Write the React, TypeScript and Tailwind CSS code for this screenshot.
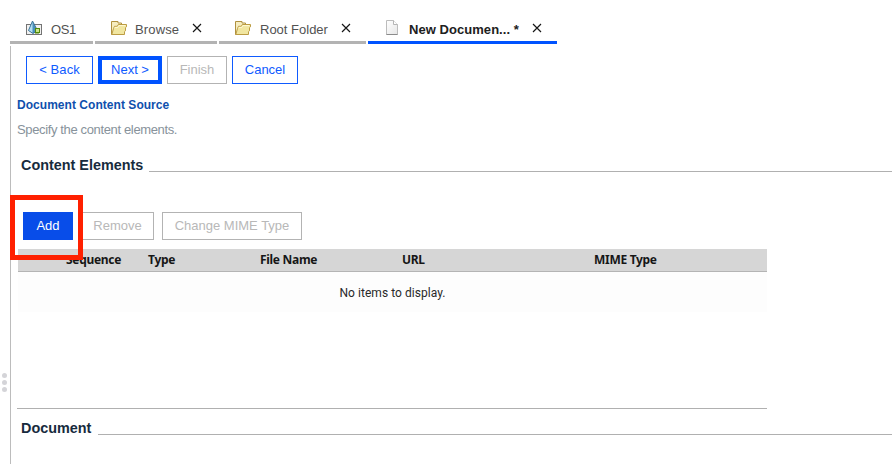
import type { ReactNode } from 'react';

const CubeIcon = () => (
  <svg width="16" height="15" viewBox="0 0 16 15">
    <rect x="0.5" y="4.5" width="15" height="10" fill="#f1f1f1" stroke="#747474" />
    <path d="M6.5 1 2.5 10.5l4.5 3 4.5-3Z" fill="#4a91bb" />
    <path d="M6.5 1 2.5 10.5l4 2.5Z" fill="#b3def2" />
    <path d="M6.5 1 2.5 10.5l4.5 3 4.5-3Z" fill="none" stroke="#376e92" strokeWidth="0.9" />
    <rect x="9.5" y="8.5" width="4" height="4" fill="#c9e58a" stroke="#528a0b" />
    <path d="M9 12.5h4v1H9z" fill="#528a0b" />
  </svg>
);

const FolderIcon = () => (
  <svg width="16" height="14" viewBox="0 0 16 14">
    <path d="M.5 13.5V.5H7V2h3.5v4L9 13.5Z" fill="#f6edc0" stroke="#b0913e" />
    <path d="M.8 13.5 2.5 7.5l1-2.2h2.8l1-1.8h8.2v2.3l-1 .8v3.2l-1 .8v2.9Z" fill="#f1e6a0" stroke="#bc9c43" />
    <path d="M3.6 6.4h3.2l1-1.8h6.7" fill="none" stroke="#fff9d6" />
  </svg>
);

const PageIcon = () => (
  <svg width="12" height="15" viewBox="0 0 12 15">
    <defs>
      <linearGradient id="sheet" x2="1" y2="1">
        <stop stopColor="#fff" />
        <stop offset="1" stopColor="#e6e6e6" />
      </linearGradient>
    </defs>
    <path d="M.5.5h7l4 4v10H.5Z" fill="url(#sheet)" stroke="#bcbcbc" />
    <path d="M.5 14.5h11" stroke="#8b8b8b" />
    <path d="M7.5.5v4h4" fill="#fff" stroke="#b5b5b5" />
  </svg>
);

const CloseIcon = () => (
  <svg className="mt-[23px] shrink-0" width="10" height="10" viewBox="0 0 10 10">
    <path d="m1 1 8 8M9 1 1 9" stroke="#161616" strokeWidth="1.15" fill="none" />
  </svg>
);

function Tab({ icon, label, className, labelClass, iconClass, closable }: {
  icon: ReactNode; label: string; className: string; labelClass: string; iconClass: string; closable?: boolean;
}) {
  return (
    <div className={`flex h-11 shrink-0 items-start border-b-[3px] ${className}`}>
      <span className={`shrink-0 ${iconClass}`}>{icon}</span>
      <span className={`mt-[21px] shrink-0 whitespace-nowrap text-[13px] leading-[18px] ${labelClass}`}>{label}</span>
      {closable && <CloseIcon />}
    </div>
  );
}

function Button({ children, className }: { children: ReactNode; className: string }) {
  return (
    <button className={`flex h-7 shrink-0 items-center justify-center whitespace-nowrap text-[13px] leading-[18px] ${className}`}>
      {children}
    </button>
  );
}

function Section({ title, className, width }: { title: string; className: string; width: string }) {
  return (
    <div className={`flex h-5 pl-[10px] ${className}`}>
      <h2 className={`shrink-0 whitespace-nowrap text-[14.4px] leading-5 font-bold text-[#172b3d] ${width}`}>{title}</h2>
      <div className="mt-4 h-px flex-1 bg-[#b0b0b0]" />
    </div>
  );
}

const outline = 'border border-[#0f5bff] text-[#0f5bff]';
const disabled = 'border border-[#b3b3b3] text-[#b8b8b8]';

export default function App() {
  return (
    <div className="relative flex h-[464px] w-[892px] flex-col overflow-hidden bg-white font-['Liberation_Sans',Arial,sans-serif]">
      <nav className="flex h-11 gap-0.5 pl-[10px]">
        <Tab icon={<CubeIcon />} label="OS1" className="w-[83px] border-[#b3b3b3]" iconClass="ml-4 mt-5 w-[25px]" labelClass="tracking-[-0.4px] text-[#525252]" />
        <Tab icon={<FolderIcon />} label="Browse" className="w-[122px] border-[#b3b3b3]" iconClass="ml-4 mt-[21px] w-6" labelClass="w-[57px] tracking-[0.15px] text-[#525252]" closable />
        <Tab icon={<FolderIcon />} label="Root Folder" className="w-[147px] border-[#b3b3b3]" iconClass="ml-4 mt-[21px] w-[25px]" labelClass="w-[81px] text-[#525252]" closable />
        <Tab icon={<PageIcon />} label="New Documen... *" className="w-[189px] border-[#0053ff]" iconClass="ml-[18px] mt-5 w-[23px]" labelClass="w-[123px] font-bold tracking-[0.05px] text-[#202020]" closable />
      </nav>
      <div className="mt-0.5 flex min-h-0 flex-1">
        <aside className="flex w-[10px] shrink-0 flex-col gap-0.5 pt-[327px] pl-0.5">
          <i className="size-[5px] rounded-full bg-[#d4d4d8]" />
          <i className="size-[5px] rounded-full bg-[#d4d4d8]" />
          <i className="size-[5px] rounded-full bg-[#d4d4d8]" />
        </aside>
        <main className="min-w-0 flex-1 border-l border-[#bcbcbc] pt-[10px]">
          <div className="flex gap-[5px] pl-[15px]">
            <Button className={`w-[67px] tracking-[0.1px] ${outline}`}>&lt; Back</Button>
            <Button className="w-16 border-4 border-[#0053ff] text-[#0f5bff]">Next &gt;</Button>
            <Button className={`w-[60px] ${disabled}`}>Finish</Button>
            <Button className={`w-[66px] ${outline}`}>Cancel</Button>
          </div>
          <h1 className="mt-3 pl-1.5 text-[12px] leading-[18px] font-bold tracking-[0.04px] text-[#0f50ad]">Document Content Source</h1>
          <p className="mt-[7px] pl-1.5 text-[13px] leading-[18px] tracking-[-0.36px] text-[#87929b]">Specify the content elements.</p>
          <Section title="Content Elements" className="mt-4" width="w-32" />
          <div className="mt-[37px] flex gap-2 pl-3">
            <Button className="w-[50px] bg-[#084de9] text-white">Add</Button>
            <Button className={`w-[73px] ${disabled}`}>Remove</Button>
            <Button className={`w-[140px] ${disabled}`}>Change MIME Type</Button>
          </div>
          <div className="mt-[9px] ml-1.5 h-40 w-[750px] border-b border-[#b0b0b0] pl-px font-[Roboto,sans-serif] text-[12px]">
            <div className="flex h-[23px] w-[749px] border-b border-[#b4b4b4] bg-[#d6d6d6] pl-12 leading-[22px] font-bold tracking-[-0.3px] text-[#161616] font-['Noto_Sans',sans-serif]">
              <span className="w-[82px]">Sequence</span>
              <span className="w-28">Type</span>
              <span className="w-[142px]">File Name</span>
              <span className="w-48">URL</span>
              <span>MIME Type</span>
            </div>
            <div className="h-10 w-[749px] bg-[#fdfdfd] text-center leading-[42px] tracking-[0.05px] text-[#292929]">No items to display.</div>
          </div>
          <Section title="Document" className="mt-[9px]" width="w-[77px]" />
        </main>
      </div>
      <div className="pointer-events-none absolute top-[195px] left-[10px] h-[65px] w-[73px] border-[5px] border-[#ff2000]" />
    </div>
  );
}
